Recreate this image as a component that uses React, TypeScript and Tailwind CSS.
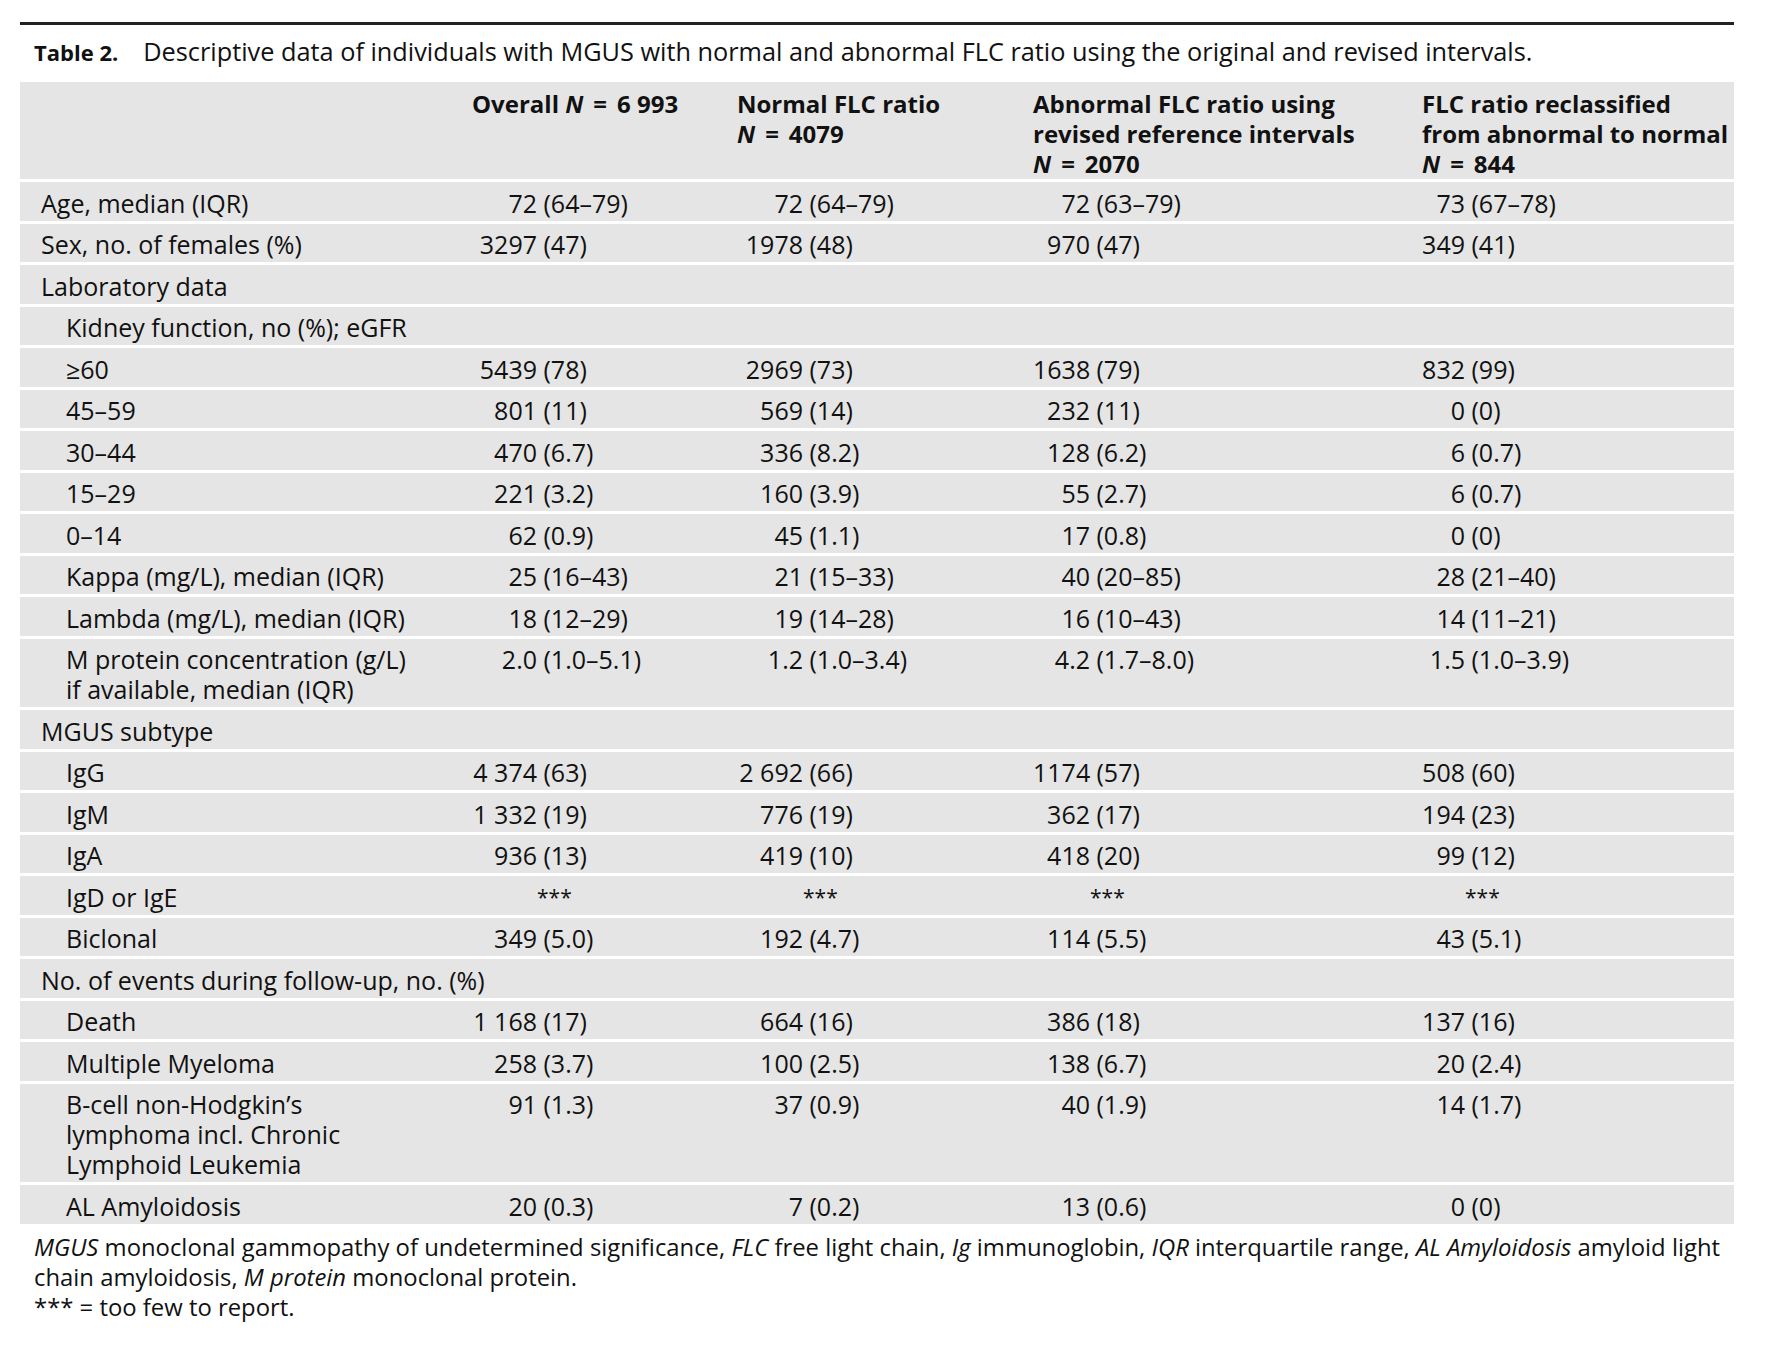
import React from "react";

type Val = [string, string] | null;
type Row = { label: string | string[]; indent?: boolean; v?: Val[] };

const STARS: Val[] = [null, null, null, null];

const rows: Row[] = [
  { label: "Age, median (IQR)", v: [["72", "(64–79)"], ["72", "(64–79)"], ["72", "(63–79)"], ["73", "(67–78)"]] },
  { label: "Sex, no. of females (%)", v: [["3297", "(47)"], ["1978", "(48)"], ["970", "(47)"], ["349", "(41)"]] },
  { label: "Laboratory data" },
  { label: "Kidney function, no (%); eGFR", indent: true },
  { label: "≥60", indent: true, v: [["5439", "(78)"], ["2969", "(73)"], ["1638", "(79)"], ["832", "(99)"]] },
  { label: "45–59", indent: true, v: [["801", "(11)"], ["569", "(14)"], ["232", "(11)"], ["0", "(0)"]] },
  { label: "30–44", indent: true, v: [["470", "(6.7)"], ["336", "(8.2)"], ["128", "(6.2)"], ["6", "(0.7)"]] },
  { label: "15–29", indent: true, v: [["221", "(3.2)"], ["160", "(3.9)"], ["55", "(2.7)"], ["6", "(0.7)"]] },
  { label: "0–14", indent: true, v: [["62", "(0.9)"], ["45", "(1.1)"], ["17", "(0.8)"], ["0", "(0)"]] },
  { label: "Kappa (mg/L), median (IQR)", indent: true, v: [["25", "(16–43)"], ["21", "(15–33)"], ["40", "(20–85)"], ["28", "(21–40)"]] },
  { label: "Lambda (mg/L), median (IQR)", indent: true, v: [["18", "(12–29)"], ["19", "(14–28)"], ["16", "(10–43)"], ["14", "(11–21)"]] },
  {
    label: ["M protein concentration (g/L)", "if available, median (IQR)"],
    indent: true,
    v: [["2.0", "(1.0–5.1)"], ["1.2", "(1.0–3.4)"], ["4.2", "(1.7–8.0)"], ["1.5", "(1.0–3.9)"]],
  },
  { label: "MGUS subtype" },
  { label: "IgG", indent: true, v: [["4 374", "(63)"], ["2 692", "(66)"], ["1174", "(57)"], ["508", "(60)"]] },
  { label: "IgM", indent: true, v: [["1 332", "(19)"], ["776", "(19)"], ["362", "(17)"], ["194", "(23)"]] },
  { label: "IgA", indent: true, v: [["936", "(13)"], ["419", "(10)"], ["418", "(20)"], ["99", "(12)"]] },
  { label: "IgD or IgE", indent: true, v: STARS },
  { label: "Biclonal", indent: true, v: [["349", "(5.0)"], ["192", "(4.7)"], ["114", "(5.5)"], ["43", "(5.1)"]] },
  { label: "No. of events during follow-up, no. (%)" },
  { label: "Death", indent: true, v: [["1 168", "(17)"], ["664", "(16)"], ["386", "(18)"], ["137", "(16)"]] },
  { label: "Multiple Myeloma", indent: true, v: [["258", "(3.7)"], ["100", "(2.5)"], ["138", "(6.7)"], ["20", "(2.4)"]] },
  {
    label: ["B-cell non-Hodgkin’s", "lymphoma incl. Chronic", "Lymphoid Leukemia"],
    indent: true,
    v: [["91", "(1.3)"], ["37", "(0.9)"], ["40", "(1.9)"], ["14", "(1.7)"]],
  },
  { label: "AL Amyloidosis", indent: true, v: [["20", "(0.3)"], ["7", "(0.2)"], ["13", "(0.6)"], ["0", "(0)"]] },
];

const anchorCls = ["w-[65px]", "w-[66px]", "w-[57px]", "w-[43px]"];

function Cell({ val, idx }: { val: Val; idx: number }) {
  return (
    <div className="flex whitespace-nowrap">
      <span className={`${anchorCls[idx]} shrink-0 text-right`}>{val ? val[0] : ""}</span>
      {val ? <span>{"\u00a0" + val[1]}</span> : <span className="text-[21px]">***</span>}
    </div>
  );
}

const GRID = "grid grid-cols-[452px_265px_296px_389px_312px]";

function NEq({ n }: { n: string }) {
  return (
    <>
      <i>N</i>
      <span className="mx-[10px]">=</span>
      {n}
    </>
  );
}

export default function App() {
  return (
    <div className="w-[1770px] h-[1346px] bg-white font-['Open_Sans',sans-serif] text-[25px] leading-[30px] text-[#111]">
      <div className="ml-[20px] w-[1714px] pt-[22px]">
        <div className="h-[3px] bg-[#222]" />
        <div className="mt-[11px] flex items-baseline pl-[14px] whitespace-nowrap">
          <span className="text-[22px] font-bold">Table 2.</span>
          <span className="ml-[25px] text-[25.3px]">
            Descriptive data of individuals with MGUS with normal and abnormal FLC ratio using the original and revised intervals.
          </span>
        </div>

        <div className="mt-[15px] flex flex-col gap-[3px]">
          <div className={`${GRID} h-[97px] bg-[#e5e5e5] pt-[7px] text-[24px] font-bold`}>
            <div />
            <div className="whitespace-nowrap">
              Overall <NEq n="6 993" />
            </div>
            <div className="whitespace-nowrap">
              Normal FLC ratio
              <br />
              <NEq n="4079" />
            </div>
            <div className="whitespace-nowrap">
              Abnormal FLC ratio using
              <br />
              revised reference intervals
              <br />
              <NEq n="2070" />
            </div>
            <div className="whitespace-nowrap">
              FLC ratio reclassified
              <br />
              from abnormal to normal
              <br />
              <NEq n="844" />
            </div>
          </div>

          {rows.map((r, i) => (
            <div key={i} className={`${GRID} bg-[#e5e5e5] pt-[5.5px] pb-[3px]`}>
              <div className={r.indent ? "pl-[46px] whitespace-nowrap" : "pl-[21px] whitespace-nowrap"}>
                {Array.isArray(r.label)
                  ? r.label.map((l, j) => <div key={j}>{l}</div>)
                  : r.label}
              </div>
              {r.v ? r.v.map((v, k) => <Cell key={k} val={v} idx={k} />) : null}
            </div>
          ))}
        </div>

        <div className="mt-[8px] pl-[14px] whitespace-nowrap text-[23.85px]">
          <div>
            <i>MGUS</i> monoclonal gammopathy of undetermined significance, <i>FLC</i> free light chain, <i>Ig</i>{" "}
            immunoglobin, <i>IQR</i> interquartile range, <i>AL Amyloidosis</i> amyloid light
          </div>
          <div>
            chain amyloidosis, <i>M protein</i> monoclonal protein.
          </div>
          <div>*** = too few to report.</div>
        </div>
      </div>
    </div>
  );
}
